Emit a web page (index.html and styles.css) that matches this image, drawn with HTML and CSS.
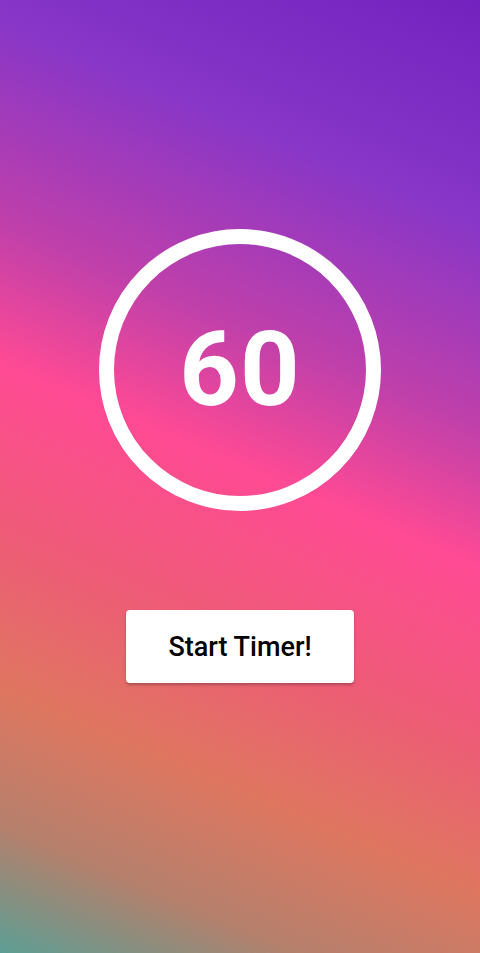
FILE: index.html
```html
<!DOCTYPE html>
<html lang="en">
<head>
<meta charset="utf-8">
<title>Timer</title>
<link rel="stylesheet" href="styles.css">
</head>
<body>
<main class="screen">
  <div class="ring">
    <span class="count">60</span>
  </div>
  <button class="start-btn" type="button">Start Timer!</button>
</main>
</body>
</html>
```

FILE: styles.css
```css
html, body {
  margin: 0;
  padding: 0;
  height: 100%;
}

body {
  font-family: Roboto, "Noto Sans", sans-serif;
}

.screen {
  width: 480px;
  height: 953px;
  box-sizing: border-box;
  display: flex;
  flex-direction: column;
  align-items: center;
  padding-top: 229px;
  background: linear-gradient(203deg,
    #7322bf 0%,
    #8736c8 19%,
    #c040aa 37%,
    #ff4a94 49%,
    #ef5a78 63%,
    #df7660 77%,
    #b5806c 89%,
    #5c9e94 100%);
}

.ring {
  width: 282px;
  height: 282px;
  box-sizing: border-box;
  border: 15px solid #ffffff;
  border-radius: 50%;
  display: flex;
  align-items: center;
  justify-content: center;
}

.count {
  color: #ffffff;
  font-weight: 700;
  font-size: 104px;
  line-height: 1;
  letter-spacing: 1px;
}

.start-btn {
  margin-top: 99px;
  width: 228px;
  height: 73px;
  border: none;
  border-radius: 4px;
  background: #ffffff;
  color: #000000;
  font-family: Roboto, "Noto Sans", sans-serif;
  font-weight: 500;
  font-size: 27px;
  box-shadow: 0 2px 3px rgba(0, 0, 0, 0.25);
  cursor: pointer;
}
```
